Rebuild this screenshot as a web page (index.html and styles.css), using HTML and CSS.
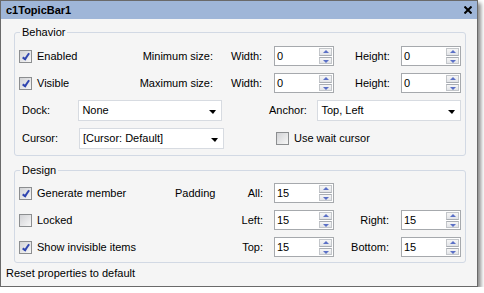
FILE: index.html
```html
<!DOCTYPE html>
<html lang="en">
<head>
  <meta charset="UTF-8" />
  <title>c1TopicBar1</title>
  <link rel="stylesheet" href="styles.css">
</head>
<body>
  <div class="window">
    <div class="titlebar">
      <span class="title">c1TopicBar1</span>
      <svg class="close" width="8" height="8" viewBox="0 0 8 8"><path d="M0.5 0.5 L7.5 7.5 M7.5 0.5 L0.5 7.5" stroke="#000" stroke-width="2"/></svg>
    </div>

    <fieldset class="group">
      <legend>Behavior</legend>
      <div class="group-body">
        <div class="row">
          <label class="check check-b"><span class="box on"></span>Enabled</label>
          <span class="size-label">Minimum size:</span>
          <span class="dim">Width:</span>
          <div class="spin"><span class="val">0</span><span class="btns"><span class="up"></span><span class="down"></span></span></div>
          <span class="dim dim-h">Height:</span>
          <div class="spin"><span class="val">0</span><span class="btns"><span class="up"></span><span class="down"></span></span></div>
        </div>
        <div class="row">
          <label class="check check-b"><span class="box on"></span>Visible</label>
          <span class="size-label">Maximum size:</span>
          <span class="dim">Width:</span>
          <div class="spin"><span class="val">0</span><span class="btns"><span class="up"></span><span class="down"></span></span></div>
          <span class="dim dim-h">Height:</span>
          <div class="spin"><span class="val">0</span><span class="btns"><span class="up"></span><span class="down"></span></span></div>
        </div>
        <div class="row row-combo">
          <span class="field-label">Dock:</span>
          <div class="combo"><span>None</span><span class="arrow"></span></div>
          <span class="field-label anchor">Anchor:</span>
          <div class="combo"><span>Top, Left</span><span class="arrow"></span></div>
        </div>
        <div class="row row-combo">
          <span class="field-label">Cursor:</span>
          <div class="combo"><span>[Cursor: Default]</span><span class="arrow"></span></div>
          <label class="check wait"><span class="box"></span>Use wait cursor</label>
        </div>
      </div>
    </fieldset>

    <fieldset class="group design">
      <legend>Design</legend>
      <div class="group-body">
        <div class="row">
          <label class="check check-d"><span class="box on"></span>Generate member</label>
          <span class="pad-label">Padding</span>
          <span class="side">All:</span>
          <div class="spin"><span class="val">15</span><span class="btns"><span class="up"></span><span class="down"></span></span></div>
        </div>
        <div class="row">
          <label class="check check-d"><span class="box"></span>Locked</label>
          <span class="pad-label"></span>
          <span class="side">Left:</span>
          <div class="spin"><span class="val">15</span><span class="btns"><span class="up"></span><span class="down"></span></span></div>
          <span class="side side-r">Right:</span>
          <div class="spin"><span class="val">15</span><span class="btns"><span class="up"></span><span class="down"></span></span></div>
        </div>
        <div class="row">
          <label class="check check-d"><span class="box on"></span>Show invisible items</label>
          <span class="pad-label"></span>
          <span class="side">Top:</span>
          <div class="spin"><span class="val">15</span><span class="btns"><span class="up"></span><span class="down"></span></span></div>
          <span class="side side-r">Bottom:</span>
          <div class="spin"><span class="val">15</span><span class="btns"><span class="up"></span><span class="down"></span></span></div>
        </div>
      </div>
    </fieldset>

    <div class="status">Reset properties to default</div>
  </div>
</body>
</html>
```

FILE: styles.css
```css
body {
  margin: 0;
  background: #fff;
  font-family: "Liberation Sans", Arial, sans-serif;
  font-size: 11px;
  line-height: 13px;
  color: #000;
}
.window {
  width: 476px;
  height: 285px;
  border: 1px solid #6a6a6a;
  background: #f5f5f5;
  box-shadow: 3px 3px 4px rgba(0, 0, 0, 0.45);
}
.titlebar {
  height: 18px;
  background: #9fb6d8;
  display: flex;
  align-items: center;
  justify-content: space-between;
  padding: 0 5px;
}
.title {
  font-weight: bold;
}
.close {
  display: block;
}
.group {
  margin: 7px 11px 0 13px;
  padding: 0;
  border: 1px solid #d2d9e4;
  border-radius: 3px;
  min-width: 0;
}
.group legend {
  margin-left: 5px;
  padding: 0 2px;
}
.group-body {
  padding: 7px 4px 6px 4px;
  display: flex;
  flex-direction: column;
  gap: 7px;
}
.design {
  margin-top: 8px;
}
.design .group-body {
  padding-top: 6px;
  padding-bottom: 5px;
}
.row {
  display: flex;
  align-items: center;
  height: 20px;
}
.row-combo {
  height: 21px;
}
.check {
  display: flex;
  align-items: center;
  gap: 5px;
}
.check-b {
  width: 105px;
}
.check-d {
  width: 156px;
}
.box {
  width: 11px;
  height: 11px;
  border: 1px solid #8c8e90;
  background: linear-gradient(135deg, #d2d3d6, #f7f7f7);
  position: relative;
}
.box.on::after {
  content: "";
  position: absolute;
  left: 4px;
  top: 1px;
  width: 2px;
  height: 6px;
  border: solid #3046b0;
  border-width: 0 2px 2px 0;
  transform: rotate(35deg);
}
.size-label {
  width: 89px;
  text-align: right;
}
.dim {
  margin-left: 18px;
  width: 43px;
}
.dim-h {
  margin-left: 21px;
  width: 46px;
}
.spin {
  width: 58px;
  height: 18px;
  border: 1px solid #a6a9ad;
  background: #fff;
  display: flex;
}
.spin .val {
  flex: 1;
  padding-left: 2px;
  line-height: 18px;
}
.btns {
  width: 13px;
  margin: 1px;
  display: flex;
  flex-direction: column;
  gap: 1px;
}
.btns span {
  flex: 1;
  border: 1px solid #c3c6ca;
  background: linear-gradient(#f6f6f6, #e2e4e8);
  position: relative;
}
.btns .up {
  border-bottom-color: #a9adb3;
}
.btns .down {
  border-top-color: #a9adb3;
}
.btns .up::after,
.btns .down::after {
  content: "";
  position: absolute;
  left: 3px;
  border-left: 3px solid transparent;
  border-right: 3px solid transparent;
}
.btns .up::after {
  top: 1px;
  border-bottom: 3px solid #5b70c6;
}
.btns .down::after {
  top: 2px;
  border-top: 3px solid #5b70c6;
}
.field-label {
  margin-left: 3px;
  width: 57px;
}
.field-label.anchor {
  margin-left: 47px;
  width: 49px;
}
.combo {
  width: 135px;
  height: 19px;
  border: 1px solid #d7dbe1;
  background: #fff;
  padding: 0 5px 0 3px;
  display: flex;
  align-items: center;
  justify-content: space-between;
}
.arrow {
  width: 0;
  height: 0;
  border-left: 4px solid transparent;
  border-right: 3px solid transparent;
  border-top: 4px solid #000;
  margin-top: 2px;
}
.wait {
  margin-left: 52px;
}
.pad-label {
  width: 60px;
}
.side {
  width: 28px;
  padding-right: 11px;
  text-align: right;
}
.side-r {
  width: 55px;
  padding-right: 12px;
}
.status {
  padding: 4px 5px 0;
}
```
